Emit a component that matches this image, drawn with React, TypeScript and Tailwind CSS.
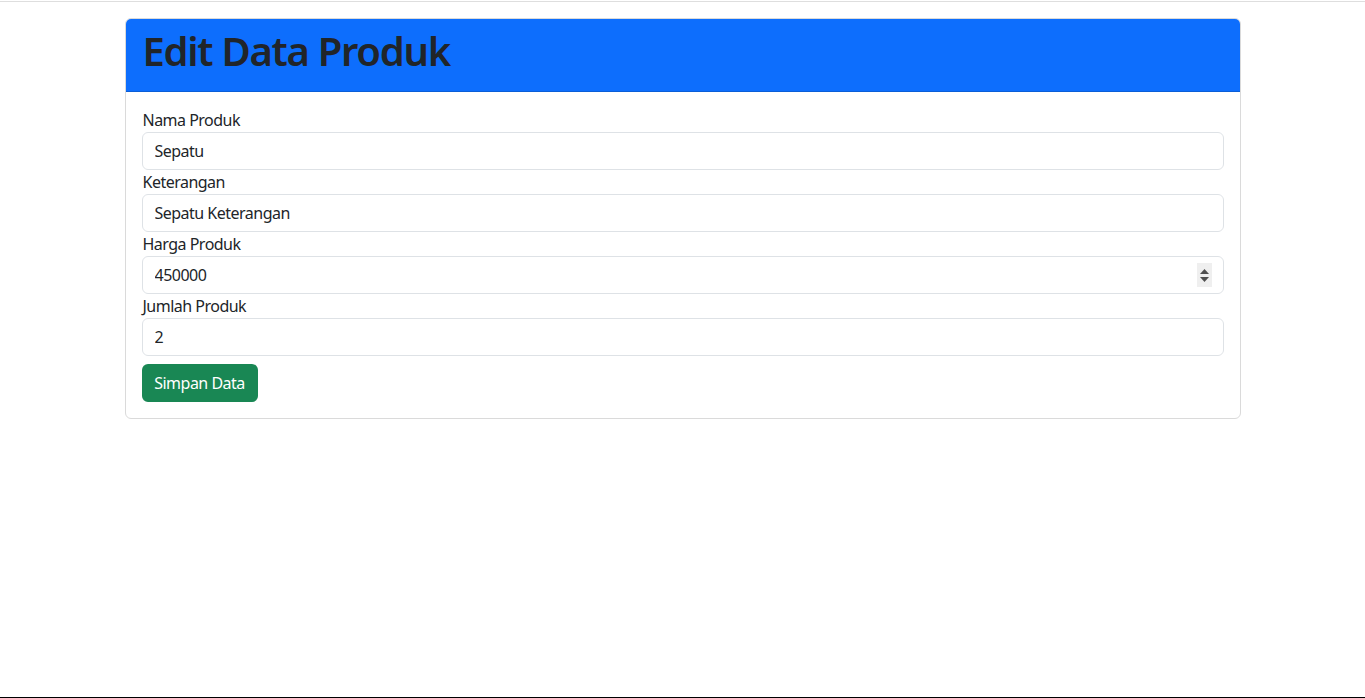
import { useState } from "react";

const fields = [
  { label: "Nama Produk", value: "Sepatu", type: "text" },
  { label: "Keterangan", value: "Sepatu Keterangan", type: "text" },
  { label: "Harga Produk", value: "450000", type: "number" },
  { label: "Jumlah Produk", value: "2", type: "text" },
];

function Spinner() {
  return (
    <div className="absolute right-[12px] top-[7px] flex h-[24px] w-[15px] flex-col items-center justify-center gap-[3px] bg-[#efefef]">
      <svg width="9" height="5" viewBox="0 0 9 5"><path d="M0 5 L4.5 0 L9 5 Z" fill="#505050" /></svg>
      <svg width="9" height="5" viewBox="0 0 9 5"><path d="M0 0 L4.5 5 L9 0 Z" fill="#505050" /></svg>
    </div>
  );
}

export default function App() {
  const [values, setValues] = useState(fields.map(f => f.value));

  return (
    <div className="flex h-[698px] flex-col border-b border-black bg-white pt-px font-['Noto_Sans',sans-serif] tracking-[-0.032em] text-[#212529]">
      <div className="border-t border-[#dedede]">
        <div className="mx-auto mt-4 w-[1140px] px-3">
          <div className="overflow-hidden rounded-[6px] border border-[#dadada]">
            <div className="border-b border-[#0b5ed7] bg-[#0d6efd] px-4 py-2">
              <h1 className="mb-2 pl-px text-[40px] leading-[48px] font-semibold tracking-[-0.032em]">Edit Data Produk</h1>
            </div>
            <div className="p-4">
              {fields.map((f, i) => (
                <div key={f.label}>
                  <label className="block pl-px text-base leading-6">{f.label}</label>
                  <div className="relative">
                    <input
                      type="text"
                      value={values[i]}
                      onChange={e => setValues(values.map((v, j) => (j === i ? e.target.value : v)))}
                      className="block h-[38px] w-full rounded-[6px] border border-[#dee2e6] px-3 text-base tracking-[-0.032em] text-[#212529] outline-none"
                    />
                    {f.type === "number" && <Spinner />}
                  </div>
                </div>
              ))}
              <button className="mt-2 h-[38px] w-[116px] rounded-[6px] bg-[#198754] text-base tracking-[-0.032em] text-white">Simpan Data</button>
            </div>
          </div>
        </div>
      </div>
    </div>
  );
}
